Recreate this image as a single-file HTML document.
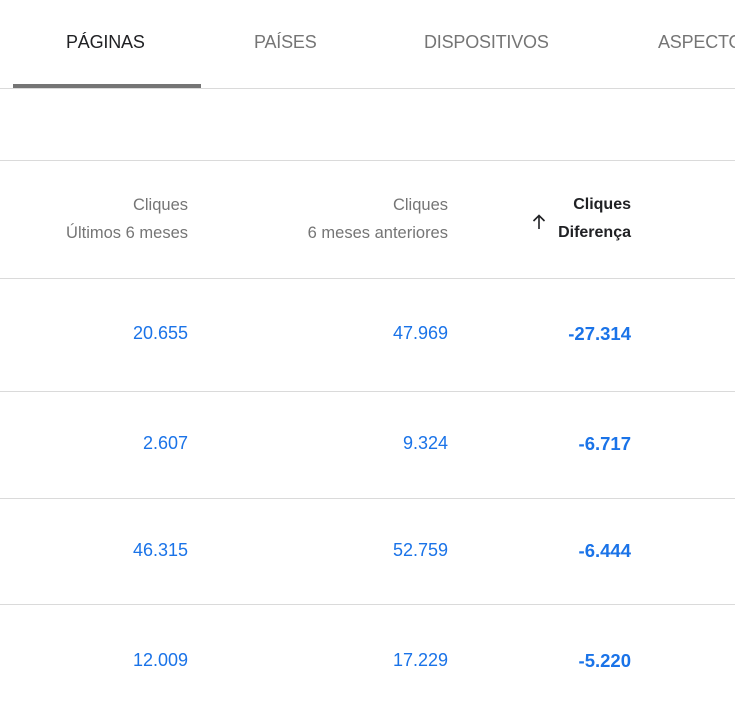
<html><head><style>
body{margin:0;width:735px;height:707px;overflow:hidden;background:#fff;font-family:"Liberation Sans",Roboto,sans-serif;position:relative}
.t{position:absolute;top:32px;font-size:18px;font-weight:500;color:#757575;white-space:nowrap;letter-spacing:-0.2px}
.l{position:absolute;left:0;width:735px;height:1px;background:#dadada}
.r{position:absolute;font-size:16.5px;white-space:nowrap;text-align:right}
.h{color:#757575}
.v{color:#1a73e8;font-size:18px}
.b{font-weight:bold}
.v.b{font-size:18.5px}
</style></head><body>
<div class="t" style="left:66px;color:#202124">PÁGINAS</div>
<div class="t" style="left:254px">PAÍSES</div>
<div class="t" style="left:424px">DISPOSITIVOS</div>
<div class="t" style="left:658px">ASPECTOS</div>
<div style="position:absolute;left:13px;top:84px;width:188px;height:4px;background:#757575"></div>
<div class="l" style="top:88px"></div>
<div class="l" style="top:160px"></div>
<div class="l" style="top:278px"></div>
<div class="l" style="top:391px"></div>
<div class="l" style="top:498px"></div>
<div class="l" style="top:604px"></div>
<div class="r h" style="right:547px;top:196px">Cliques</div>
<div class="r h" style="right:547px;top:224px">Últimos 6 meses</div>
<div class="r h" style="right:287px;top:196px">Cliques</div>
<div class="r h" style="right:287px;top:224px">6 meses anteriores</div>
<div class="r b" style="right:104px;top:196px;color:#202124;font-size:16px">Cliques</div>
<div class="r b" style="right:104px;top:224px;color:#202124;font-size:16px">Diferença</div>
<svg style="position:absolute;left:532px;top:214px" width="14" height="15" viewBox="0 0 14 15"><path d="M7 15V1.5M1.5 7L7 1.5 12.5 7" fill="none" stroke="#202124" stroke-width="1.6"/></svg>
<div class="r v" style="right:547px;top:323px">20.655</div>
<div class="r v" style="right:287px;top:323px">47.969</div>
<div class="r v b" style="right:104px;top:323px">-27.314</div>
<div class="r v" style="right:547px;top:433px">2.607</div>
<div class="r v" style="right:287px;top:433px">9.324</div>
<div class="r v b" style="right:104px;top:433px">-6.717</div>
<div class="r v" style="right:547px;top:540px">46.315</div>
<div class="r v" style="right:287px;top:540px">52.759</div>
<div class="r v b" style="right:104px;top:540px">-6.444</div>
<div class="r v" style="right:547px;top:650px">12.009</div>
<div class="r v" style="right:287px;top:650px">17.229</div>
<div class="r v b" style="right:104px;top:650px">-5.220</div>
</body></html>
